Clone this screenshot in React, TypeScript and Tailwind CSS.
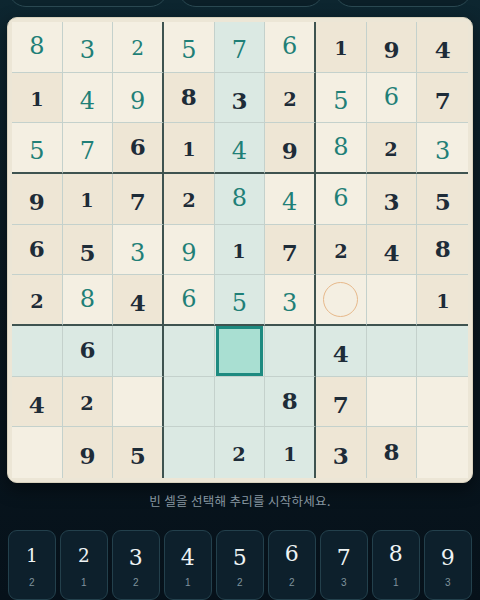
import React from 'react';

type Cell = { v: number; given: boolean };

// rows of the board: 'g' = given, 'e' = entered, '.' = empty
const ROWS: string[] = [
  '8e 3e 2e 5e 7e 6e 1g 9g 4g',
  '1g 4e 9e 8g 3g 2g 5e 6e 7g',
  '5e 7e 6g 1g 4e 9g 8e 2g 3e',
  '9g 1g 7g 2g 8e 4e 6e 3g 5g',
  '6g 5g 3e 9e 1g 7g 2g 4g 8g',
  '2g 8e 4g 6e 5e 3e .. .. 1g',
  '.. 6g .. .. .. .. 4g .. ..',
  '4g 2g .. .. .. 8g 7g .. ..',
  '.. 9g 5g .. 2g 1g 3g 8g ..',
];

const BOARD: Cell[][] = ROWS.map((r) =>
  r.split(' ').map((t) => ({ v: t[0] === '.' ? 0 : Number(t[0]), given: t[1] === 'g' }))
);

const SEL = { r: 6, c: 4 };
const HINT = { r: 5, c: 6 };

const COUNTS = [2, 1, 2, 1, 2, 2, 3, 1, 3];

// fake old-style figures
function figClass(d: number) {
  if (d === 1 || d === 2) return 'scale-[0.84] translate-y-[2px]';
  if (d === 6 || d === 8) return '';
  return 'translate-y-[4px]';
}

function Digit({ d, className }: { d: number; className?: string }) {
  return <span className={`inline-block leading-none ${figClass(d)} ${className ?? ''}`}>{d}</span>;
}

function SudokuCell({ r, c, cell }: { r: number; c: number; cell: Cell }) {
  const selected = r === SEL.r && c === SEL.c;
  const inBox = Math.floor(r / 3) === Math.floor(SEL.r / 3) && Math.floor(c / 3) === Math.floor(SEL.c / 3);
  const related = r === SEL.r || c === SEL.c || inBox;

  let bg = cell.given ? 'bg-[#eee6d5]' : 'bg-[#f4efe2]';
  if (related) bg = 'bg-[#dbe9e3]';

  const right =
    c === 8 ? '' : c === 2 || c === 5 ? 'border-r-[2.5px] border-r-[#3e5350]' : 'border-r-[1.5px] border-r-[#c4d1cc]';
  const bottom =
    r === 8 ? '' : r === 2 || r === 5 ? 'border-b-[2.5px] border-b-[#3e5350]' : 'border-b-[1.5px] border-b-[#c4d1cc]';

  return (
    <div className={`flex items-center justify-center ${bg} ${right} ${bottom}`}>
      {selected ? (
        <div className="w-full h-full m-[1px] border-[3px] border-[#1d8a80] bg-[#a9dfd2]" />
      ) : r === HINT.r && c === HINT.c ? (
        <div className="w-[35px] h-[35px] rounded-full border-[1.5px] border-[#e7b98b]" />
      ) : cell.v ? (
        <span className="pt-[2px]">
          <Digit
            d={cell.v}
            className={
              cell.given
                ? 'text-[23px] font-bold text-[#1e2c38]'
                : 'text-[24px] font-normal text-[#1f7f77]'
            }
          />
        </span>
      ) : null}
    </div>
  );
}

export default function App() {
  return (
    <div
      className="w-[480px] h-[600px] overflow-hidden bg-linear-to-b from-[#0d2630] via-[#0a1820] to-[#06111a] flex flex-col"
      style={{ fontFamily: '"DejaVu Serif", "Liberation Serif", serif' }}
    >
      {/* toolbar pills, mostly scrolled off the top */}
      <div className="flex gap-[10px] px-[8px] -mt-[29px] shrink-0">
        <div className="w-[160px] h-[36px] rounded-full border border-[#2b4952] bg-[#0c232c]" />
        <div className="w-[146px] h-[36px] rounded-full border border-[#2b4952] bg-[#0b1f28]" />
        <div className="flex-1 h-[36px] rounded-full border border-[#2b4952] bg-[#0b1f28]" />
      </div>

      {/* board */}
      <div className="mx-[7px] mt-[10px] p-[4px] rounded-[10px] bg-[#ece6d6] border border-[#d8d1bd] shadow-[0_6px_18px_rgba(0,0,0,0.45)] shrink-0">
        <div className="grid grid-cols-9 grid-rows-9 w-[456px] h-[456px]">
          {BOARD.map((row, r) => row.map((cell, c) => <SudokuCell key={`${r}-${c}`} r={r} c={c} cell={cell} />))}
        </div>
      </div>

      <p
        className="mt-[9px] text-center text-[12.5px] text-[#8796a0] tracking-[0.3px]"
        style={{ fontFamily: '"Noto Sans CJK KR", "Noto Sans", sans-serif' }}
      >
        빈 셀을 선택해 추리를 시작하세요.
      </p>

      {/* number pad */}
      <div className="mt-[19px] px-[8px] flex gap-[4.5px]">
        {COUNTS.map((n, i) => (
          <button
            key={i}
            className="w-[47.5px] h-[70px] rounded-[9px] border border-[#23404c] bg-[#0d202c] flex flex-col items-center pt-[9px]"
          >
            <span className="h-[28px] flex items-center">
              <Digit d={i + 1} className="text-[22px] text-[#eef3f4]" />
            </span>
            <span
              className="mt-[10px] text-[10px] leading-none text-[#7f929d]"
              style={{ fontFamily: '"Liberation Sans", Arial, sans-serif' }}
            >
              {n}
            </span>
          </button>
        ))}
      </div>
    </div>
  );
}
